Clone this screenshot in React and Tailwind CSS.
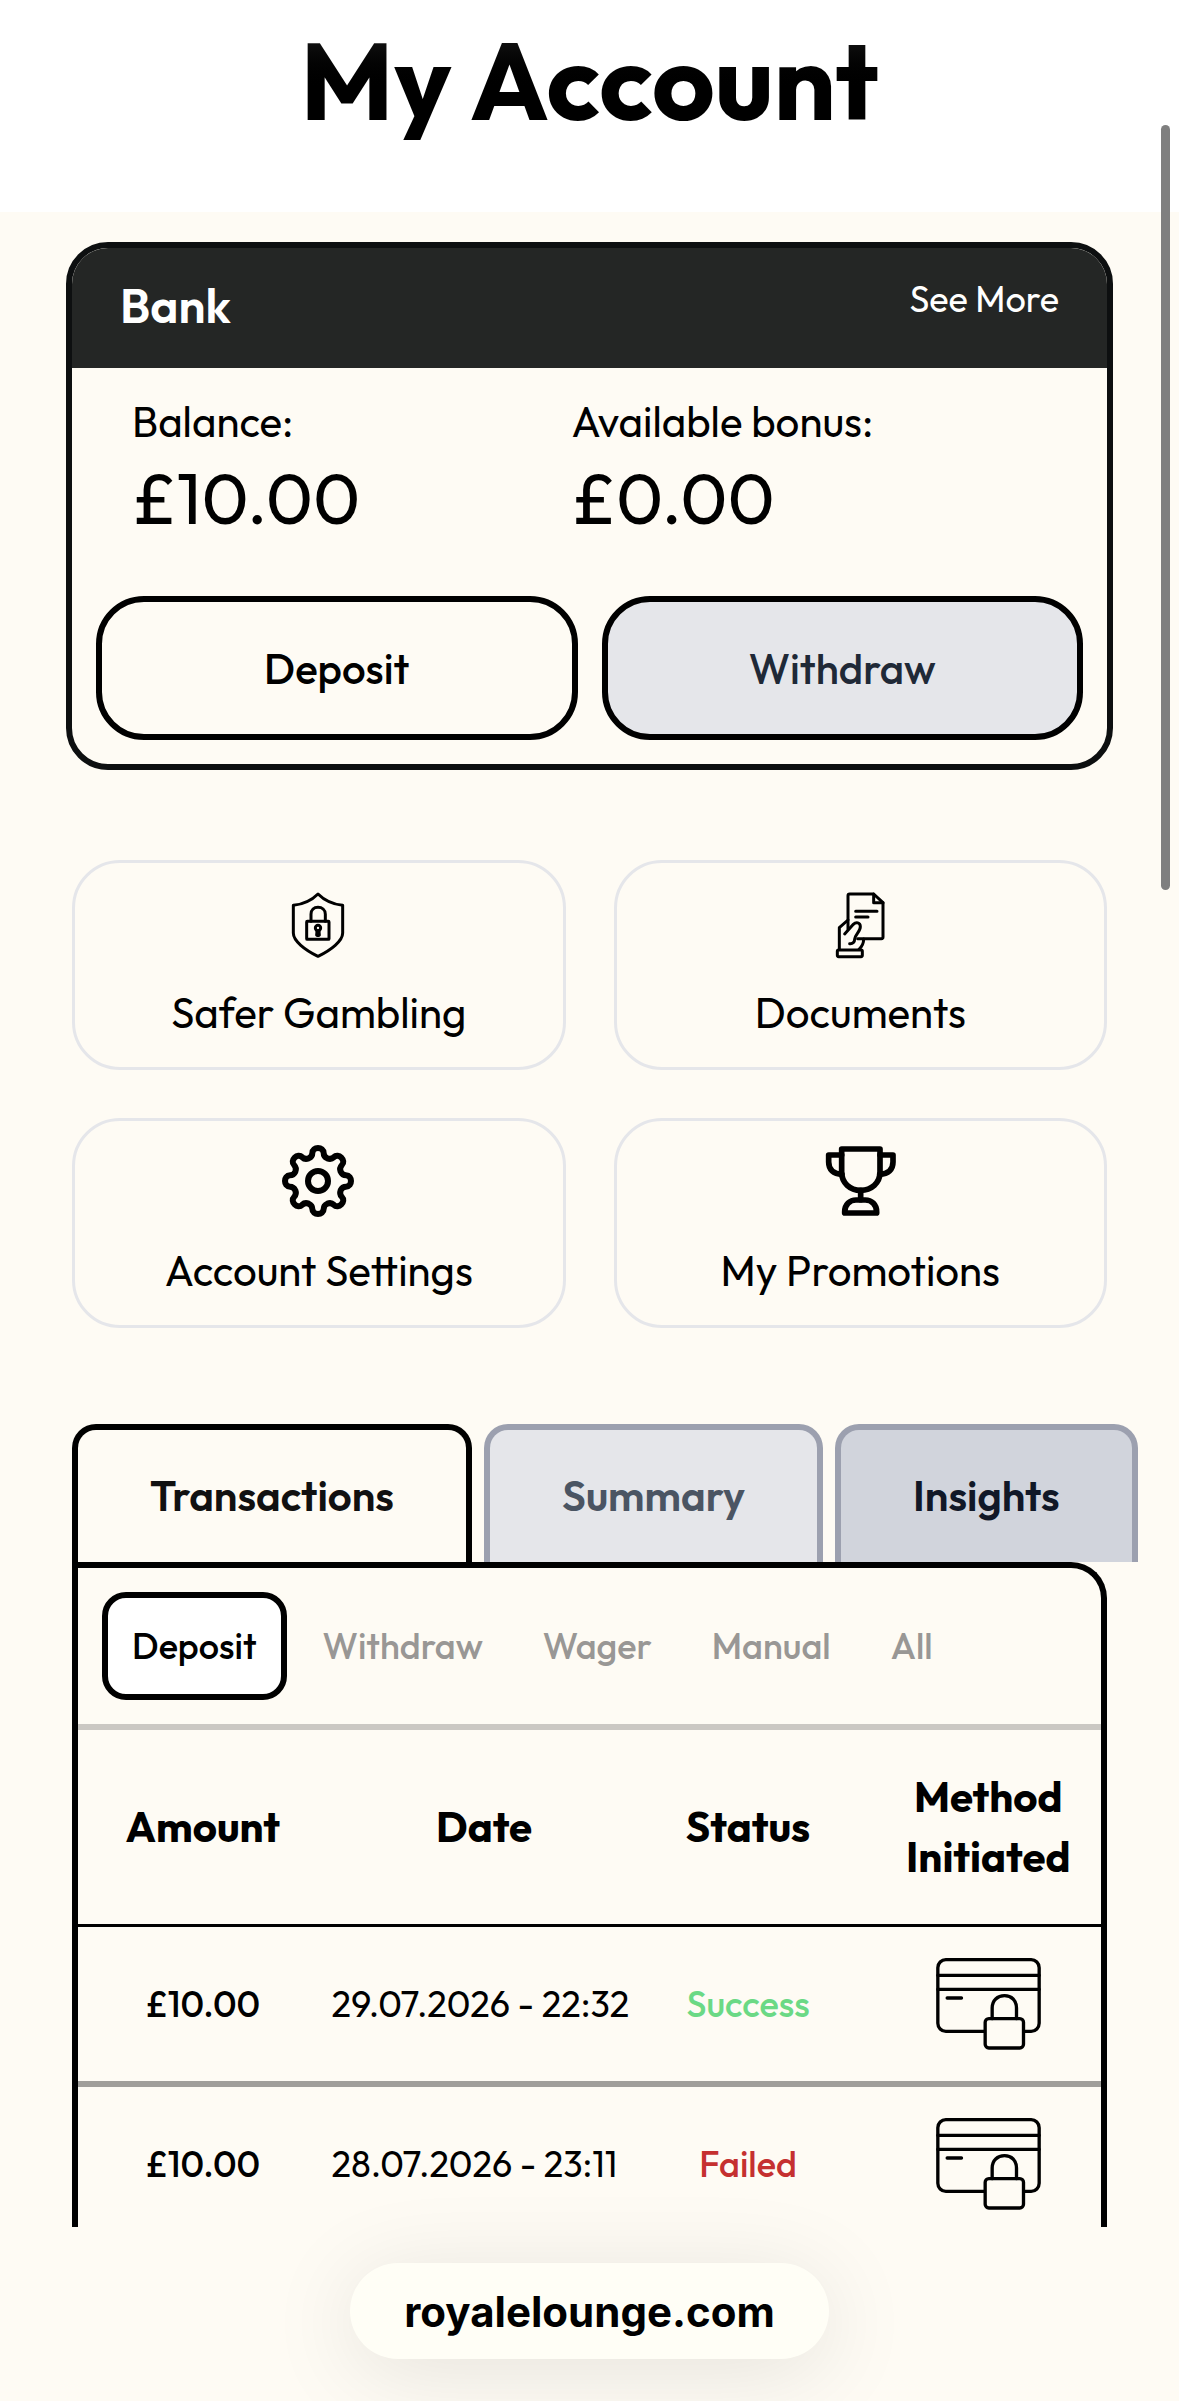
import React, { useState } from "react";

// one lobe of the cog, pointing up, as cubic curve points around the centre
const lobe = [
  [-17, -73], [-17, -80], [-17, -84],
  [-17, -94], [-9, -99], [0, -99],
  [9, -99], [17, -94], [17, -84],
  [17, -80], [17, -73], [28, -68],
];

const rotate = ([x, y], deg) => {
  const a = (deg * Math.PI) / 180;
  return [
    (105 + x * Math.cos(a) - y * Math.sin(a)).toFixed(1),
    (102 + x * Math.sin(a) + y * Math.cos(a)).toFixed(1),
  ].join(" ");
};

const cogPath =
  `M${rotate([-28, -68], 0)}` +
  [0, 45, 90, 135, 180, 225, 270, 315]
    .map((deg) => `C${lobe.map((point) => rotate(point, deg)).join(" ")}`)
    .join("") +
  "Z";

function Icon({ stroke, children }) {
  return (
    <svg
      className="size-[72px] overflow-visible"
      viewBox="0 0 216 216"
      fill="none"
      stroke="#000"
      strokeWidth={stroke}
      strokeLinecap="round"
      strokeLinejoin="round"
      aria-hidden="true"
    >
      {children}
    </svg>
  );
}

function ShieldIcon() {
  return (
    <Icon stroke={9}>
      <path d="M105 15C88 32 60 46 31 49V132C31 156 66 183 105 202C144 183 179 156 179 132V49C150 46 122 32 105 15Z" />
      <rect x="71" y="97" width="67" height="54" rx="2" />
      <path d="M84 97V76C84 62 93 55 105 55S127 62 127 76V97" />
      <circle cx="105" cy="117" r="8" />
      <path d="M102 126L101 138Q105 141 109 138L108 126" />
    </Icon>
  );
}

function DocumentIcon() {
  return (
    <Icon stroke={9}>
      <path d="M72 120V20Q72 15 77 15H149L177 41V144Q177 149 172 149H101" />
      <path d="M149 15V41H177" />
      <path d="M95 67H159M95 84H132" />
      <path d="M72 93L46 116V181" />
      <path d="M62 135L88 106C96 98 109 100 109 113C109 128 93 138 92 150C92 160 86 165 77 164" />
      <path d="M119 150C119 162 116 171 105 181" />
      <rect x="40" y="183" width="75" height="20" rx="4" />
    </Icon>
  );
}

function CogIcon() {
  return (
    <Icon stroke={18}>
      <path d={cogPath} />
      <circle cx="105" cy="102" r="30" />
    </Icon>
  );
}

function TrophyIcon() {
  return (
    <Icon stroke={17}>
      <path d="M53 6H168V76C168 108 142 130 110 130S53 108 53 76Z" />
      <path d="M53 24H14V45C14 68 28 81 54 82" />
      <path d="M168 24H207V45C207 68 193 81 167 82" />
      <path d="M110 130V158" />
      <path d="M62 198V195C62 172 78 159 96 159H124C142 159 158 172 158 195V198Z" />
    </Icon>
  );
}

function SecureCardIcon() {
  return (
    <svg
      className="mx-auto h-[92px] w-[105px]"
      viewBox="0 0 314 276"
      fill="none"
      stroke="#000"
      strokeWidth="10"
      strokeLinecap="round"
      strokeLinejoin="round"
      role="img"
      aria-label="Card"
    >
      <rect x="5" y="5" width="304" height="215" rx="24" />
      <path d="M5 52H309M5 94H309M33 120H76" />
      <rect x="147" y="182" width="115" height="88" rx="11" fill="#fefbf4" />
      <path d="M168 182V150C168 127 184 113 205 113S241 127 241 150V182" />
    </svg>
  );
}

const links = [
  { label: "Safer Gambling", icon: <ShieldIcon /> },
  { label: "Documents", icon: <DocumentIcon /> },
  { label: "Account Settings", icon: <CogIcon /> },
  { label: "My Promotions", icon: <TrophyIcon /> },
];

const tabs = [
  { label: "Transactions", style: "border-black text-[#111111]" },
  { label: "Summary", style: "border-[#9ca0af] bg-[#e5e6ea] text-[#4b5563]" },
  { label: "Insights", style: "border-[#9ca0af] bg-[#d1d4dc] text-[#111827]" },
];

const filters = ["Deposit", "Withdraw", "Wager", "Manual", "All"];

const transactions = [
  { amount: "£10.00", date: "29.07.2026 - 22:32", status: "Success" },
  { amount: "£10.00", date: "28.07.2026 - 23:11", status: "Failed" },
];

function BankCard() {
  return (
    <section className="overflow-hidden rounded-[42px] border-6 border-[#0d0f10]">
      <div className="flex h-[120px] items-start justify-between bg-[#242625] px-12 pt-[21px] text-white">
        <h2 className="text-[48px] leading-[72px] font-semibold">Bank</h2>
        <a href="#bank" className="text-[36px] leading-[60px]">
          See More
        </a>
      </div>
      <dl className="grid grid-cols-2 pt-6 pr-24 pb-[53px] pl-[60px]">
        <div>
          <dt className="text-[42px] leading-[60px]">Balance:</dt>
          <dd className="text-[72px] leading-[91px]">£10.00</dd>
        </div>
        <div>
          <dt className="text-[42px] leading-[60px]">Available bonus:</dt>
          <dd className="text-[72px] leading-[91px]">£0.00</dd>
        </div>
      </dl>
      <div className="grid grid-cols-2 gap-6 px-6 pb-6 text-[42px] font-medium">
        <button className="h-36 rounded-[48px] border-6 border-black">
          Deposit
        </button>
        <button className="h-36 rounded-[48px] border-6 border-black bg-[#e5e6ea] text-[#1f2937]">
          Withdraw
        </button>
      </div>
    </section>
  );
}

function TransactionsPanel() {
  const [filter, setFilter] = useState("Deposit");

  return (
    <div className="rounded-tr-[36px] border-x-6 border-t-6 border-black">
      <div className="flex gap-3 border-b-6 border-[#cbc8c3] p-6 text-[36px] font-medium">
        {filters.map((name) => (
          <button
            key={name}
            onClick={() => setFilter(name)}
            className={
              name === filter
                ? "h-[108px] rounded-3xl border-6 border-black bg-white px-6"
                : "h-[108px] px-6 text-[#999795]"
            }
          >
            {name}
          </button>
        ))}
      </div>
      <table className="w-full table-fixed border-collapse">
        <thead>
          <tr className="h-[195px] border-b-3 border-black text-[42px] leading-[60px] font-bold">
            <th className="w-[24%] pl-1">Amount</th>
            <th className="w-[31%] pl-1">Date</th>
            <th className="w-[21%]">Status</th>
            <th className="pl-5">Method Initiated</th>
          </tr>
        </thead>
        <tbody className="text-center text-[36px]">
          {transactions.map(({ amount, date, status }) => (
            <tr key={date} className="h-[159px] border-b-6 border-[#a09e9a]">
              <td className="pl-1 font-medium">{amount}</td>
              <td className="pl-2 text-left whitespace-nowrap">{date}</td>
              <td
                className={
                  status === "Success"
                    ? "font-medium text-[#6bd985]"
                    : "font-medium text-[#c53030]"
                }
              >
                {status}
              </td>
              <td className="pl-5">
                <SecureCardIcon />
              </td>
            </tr>
          ))}
        </tbody>
      </table>
    </div>
  );
}

export default function App() {
  return (
    <div className="relative flex h-screen flex-col bg-[#fefbf4] font-['Outfit','Lato',sans-serif] text-black">
      <div className="min-h-0 flex-1 overflow-y-auto [scrollbar-width:none]">
        <header className="bg-white pt-5 pb-18 text-center">
          <h1 className="bg-linear-to-b from-[#222222] to-black to-60% bg-clip-text text-[109px] leading-[120px] font-bold text-transparent">
            My Account
          </h1>
        </header>
        <main className="px-[66px] pt-[30px]">
          <BankCard />
          <div className="px-1.5">
            <nav className="mt-[90px] grid grid-cols-2 gap-12">
              {links.map(({ label, icon }) => (
                <a
                  key={label}
                  href="#account"
                  className="flex flex-col items-center gap-5 rounded-[48px] border-3 border-[#e5e6ea] pt-[26px] pb-[23px] text-[42px] leading-[63px]"
                >
                  {icon}
                  {label}
                </a>
              ))}
            </nav>
            <div className="mt-24 flex gap-3" role="tablist">
              {tabs.map(({ label, style }) => (
                <button
                  key={label}
                  role="tab"
                  aria-selected={label === "Transactions"}
                  className={`shrink-0 rounded-t-3xl border-x-6 border-t-6 px-[72px] py-9 text-[42px] leading-[60px] font-semibold ${style}`}
                >
                  {label}
                </button>
              ))}
            </div>
            <TransactionsPanel />
          </div>
        </main>
      </div>
      <footer className="flex h-[174px] shrink-0 justify-center pt-9">
        <div className="flex h-24 items-center rounded-full bg-[#fffef6] px-[54px] font-[Inter,sans-serif] text-[42px] font-bold shadow-[0_12px_90px_rgba(0,0,0,0.1)]">
          royalelounge.com
        </div>
      </footer>
      <div className="absolute top-[125px] right-[9px] h-[765px] w-[9px] rounded-full bg-[#7f7f7f]" />
    </div>
  );
}
